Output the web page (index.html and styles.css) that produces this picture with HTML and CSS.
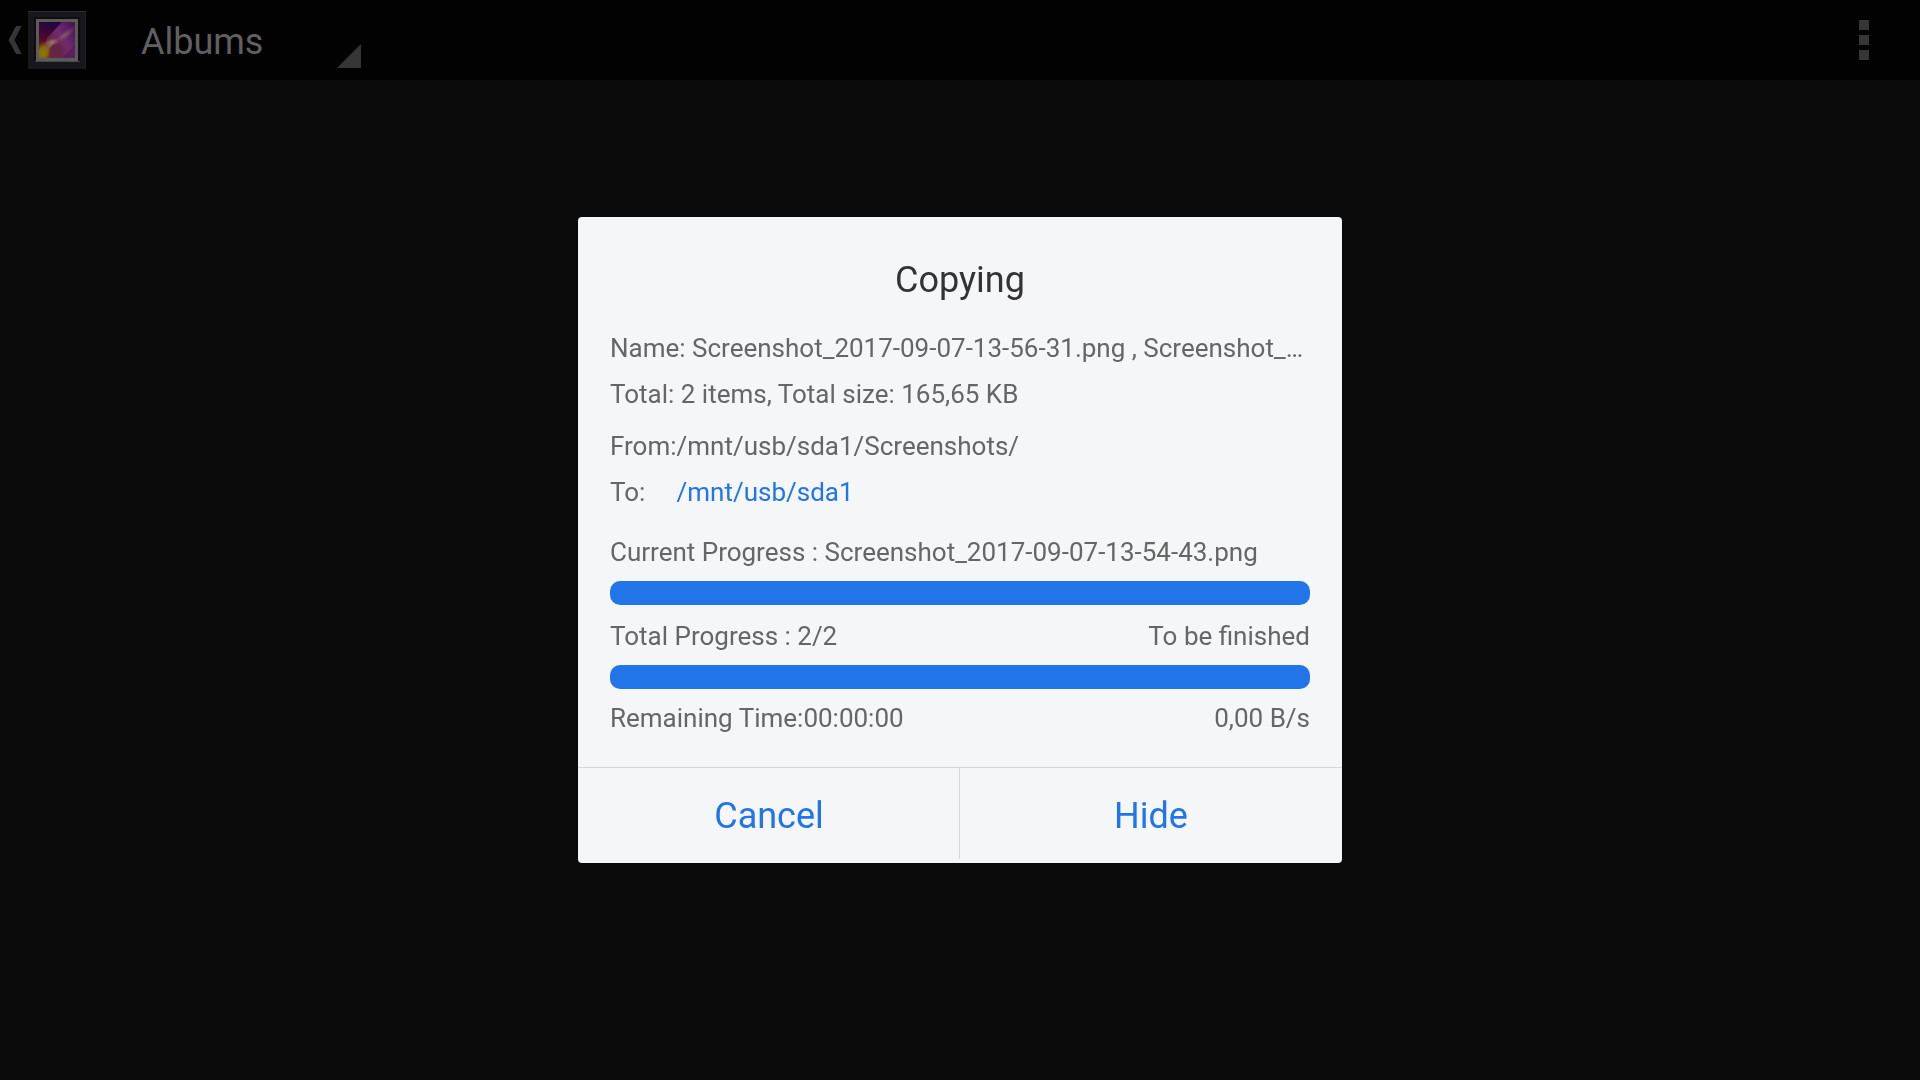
FILE: index.html
```html
<!DOCTYPE html>
<html lang="en">
<head>
<meta charset="utf-8">
<title>Albums</title>
<meta name="viewport" content="width=device-width, initial-scale=1">
<link rel="stylesheet" href="styles.css">
</head>
<body>
<header class="bar">
  <button class="up" type="button" aria-label="Back">
    <svg class="up-arrow" width="14" height="28" viewBox="0 0 14 28" aria-hidden="true"><path d="M8 0h5.500L6.500 14l7 14H8L0.500 14z" fill="#363636"/></svg>
    <svg width="58" height="58" viewBox="0 0 58 58" aria-hidden="true">
      <defs>
        <linearGradient id="petal" x1="0" y1="0.800" x2="1" y2="0.200">
          <stop offset="0" stop-color="#70401c"/><stop offset="0.350" stop-color="#6a2442"/><stop offset="0.650" stop-color="#6e2c70"/><stop offset="1" stop-color="#4c1456"/>
        </linearGradient>
        <linearGradient id="shade" x1="0.300" y1="0" x2="0.100" y2="1">
          <stop offset="0" stop-color="#240540"/><stop offset="0.500" stop-color="#4c0a2c"/><stop offset="1" stop-color="#7c4408"/>
        </linearGradient>
        <radialGradient id="glow"><stop offset="0" stop-color="#96806c"/><stop offset="1" stop-color="#8a4a60" stop-opacity="0"/></radialGradient>
        <radialGradient id="sun"><stop offset="0" stop-color="#8c7a08"/><stop offset="0.500" stop-color="#86660a"/><stop offset="1" stop-color="#70400a" stop-opacity="0"/></radialGradient>
        <clipPath id="photo"><path d="M11 11h36v36H11z"/></clipPath>
      </defs>
      <path d="M0 0h58v58H0z" fill="#18181c"/>
      <path d="M0 0h58v1H0z" fill="#2c2c2e"/>
      <path d="M57 1h1v57h-1z" fill="#222226"/>
      <path d="M6 6h46v45H6z" fill="#0d0d12"/>
      <path d="M7 50h45v1H7z" fill="#48484a"/>
      <path d="M8 8h42v42H8z" fill="#5b5b5b"/>
      <g clip-path="url(#photo)">
        <path d="M11 11h36v36H11z" fill="url(#petal)"/>
        <path d="M11 11h23L19 27l-5 20h-3z" fill="url(#shade)"/>
        <ellipse cx="37" cy="24" rx="16" ry="4" transform="rotate(-36 37 24)" fill="url(#glow)" opacity="0.600"/>
        <ellipse cx="15" cy="42" rx="9" ry="13" transform="rotate(20 15 42)" fill="url(#sun)"/>
        <path d="M22 48c-3-8 2-14 9-16l6 6-8 10z" fill="#66244a" opacity="0.800"/>
        <path d="M16 33c3-6 10-8 16-1-6-1-11 4-13 10z" fill="url(#glow)"/>
        <ellipse cx="24" cy="31" rx="8" ry="4" transform="rotate(-15 24 31)" fill="url(#glow)"/>
        <path d="M34 47l13-13v13z" fill="#501b57" opacity="0.600"/>
      </g>
    </svg>
  </button>
  <button class="picker" type="button">
    <span>Albums</span>
    <svg class="corner" width="24" height="24" viewBox="0 0 24 24" aria-hidden="true"><path d="M24 0v24H0z" fill="#363636"/></svg>
  </button>
  <button class="more" type="button" aria-label="More options">
    <svg width="10" height="40" viewBox="0 0 10 40" aria-hidden="true"><path d="M0 0h10v10H0zM0 15h10v10H0zM0 30h10v10H0z" fill="#363636"/></svg>
  </button>
</header>
<main class="stage">
  <section class="dialog" role="dialog" aria-labelledby="title">
    <div class="content">
      <h1 class="title" id="title">Copying</h1>
      <div class="lines">
        <p class="name">Name: Screenshot_2017-09-07-13-56-31.png , Screenshot_…</p>
        <p>Total: 2 items, Total size: 165,65 KB</p>
      </div>
      <dl class="paths">
        <dt>From:</dt><dd>/mnt/usb/sda1/Screenshots/</dd>
        <dt>To:</dt><dd><a class="link" href="#">/mnt/usb/sda1</a></dd>
      </dl>
      <div class="row"><label for="current">Current Progress : Screenshot_2017-09-07-13-54-43.png</label></div>
      <progress class="track" id="current" value="100" max="100"></progress>
      <div class="row"><label for="total">Total Progress : 2/2</label><span>To be finished</span></div>
      <progress class="track" id="total" value="2" max="2"></progress>
      <div class="row status"><span>Remaining Time:00:00:00</span><span>0,00 B/s</span></div>
    </div>
    <div class="actions">
      <button class="action first" type="button">Cancel</button>
      <button class="action" type="button">Hide</button>
    </div>
  </section>
</main>
</body>
</html>
```
FILE: styles.css
```css
* { box-sizing: border-box; }

body {
  margin: 0;
  min-height: 100vh;
  background: #0a0a0a;
  color: #666;
  font: 26px/30px Roboto, "Liberation Sans", sans-serif;
}

h1, p, dl, dd { margin: 0; }

button {
  margin: 0;
  padding: 0;
  border: 0;
  background: none;
  color: inherit;
  font: inherit;
  cursor: pointer;
}

svg { display: block; }

.bar {
  display: flex;
  align-items: center;
  height: 80px;
  padding: 0 51px 0 8px;
  background: #020202;
}

.up {
  display: flex;
  align-items: center;
  gap: 6px;
}

.picker {
  display: flex;
  align-items: center;
  justify-content: space-between;
  width: 220px;
  height: 56px;
  margin-left: 55px;
  padding-top: 4px;
  color: #606060;
  font-size: 36px;
  line-height: 42px;
}

.corner { align-self: flex-end; }

.more { margin-left: auto; }

/* The dialog is centred over the whole window, bar included. */
.stage {
  position: fixed;
  inset: 0;
  display: grid;
  place-items: center;
  pointer-events: none;
}

.dialog {
  width: 764px;
  max-width: 100%;
  border-radius: 4px;
  background: #f5f6f8;
  overflow: hidden;
  pointer-events: auto;
}

.content { padding: 42px 32px 34px; }

.title {
  margin-bottom: 32px;
  color: #333;
  font-size: 36px;
  font-weight: 400;
  line-height: 42px;
  text-align: center;
}

.lines {
  display: grid;
  gap: 16px;
  margin-bottom: 22px;
}

.name {
  overflow: hidden;
  text-overflow: ellipsis;
  white-space: nowrap;
}

.paths {
  display: grid;
  grid-template-columns: max-content 1fr;
  row-gap: 16px;
  margin-bottom: 30px;
}

.link {
  color: #2275e8;
  text-decoration: none;
}

.row {
  display: flex;
  justify-content: space-between;
}

.track {
  display: block;
  width: 100%;
  height: 24px;
  margin: 14px 0 16px;
  border: 0;
  border-radius: 10px;
  background: #d6d7d9;
  overflow: hidden;
  appearance: none;
}

.track::-webkit-progress-bar { background: #d6d7d9; }
.track::-webkit-progress-value { background: #2275e8; }
.track::-moz-progress-bar { background: #2275e8; }

.status { margin-top: -2px; }

.actions {
  display: grid;
  grid-template-columns: 1fr 1fr;
  border-top: 1px solid #d6d7d9;
}

.action {
  height: 95px;
  color: #2275e8;
  font-size: 36px;
  line-height: 42px;
}

/* The divider stops short of the dialog's lower edge. */
.first {
  background: linear-gradient(#d6d7d9, #d6d7d9) top right / 1px 91px no-repeat;
}
```
